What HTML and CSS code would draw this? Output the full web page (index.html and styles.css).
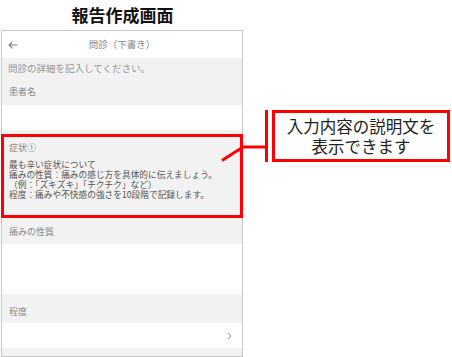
FILE: index.html
```html
<!DOCTYPE html>
<html lang="ja">
<head>
<meta charset="utf-8">
<title>報告作成画面</title>
<link rel="stylesheet" href="styles.css">
</head>
<body>
<div class="page">
  <div class="left">
    <h1 class="title">報告作成画面</h1>
    <div class="phone">
      <div class="header">
        <svg class="back" width="10" height="8" viewBox="0 0 10 8"><path d="M9.5 4H1M4.5 0.6L1 4l3.5 3.4" fill="none" stroke="#7a7a7a" stroke-width="1.1"/></svg>
        <span>問診（下書き）</span>
      </div>
      <p class="intro">問診の詳細を記入してください。</p>
      <div class="label label-first">患者名</div>
      <div class="field field-short"></div>
      <div class="section">
        <div class="section-title">症状①</div>
        <div class="desc">
          <div>最も辛い症状について</div>
          <div>痛みの性質：痛みの感じ方を具体的に伝えましょう。</div>
          <div>（例：「ズキズキ」「チクチク」など）</div>
          <div>程度：痛みや不快感の強さを10段階で記録します。</div>
        </div>
      </div>
      <div class="label label-pain">痛みの性質</div>
      <div class="field field-tall"></div>
      <div class="label label-degree">程度</div>
      <div class="field field-row">
        <svg class="chev" width="5" height="8" viewBox="0 0 5 8"><path d="M0.8 0.8L4 4 0.8 7.2" fill="none" stroke="#9a9a9a" stroke-width="1"/></svg>
      </div>
    </div>
  </div>
  <div class="highlight"></div>
  <svg class="connector" width="452" height="357" viewBox="0 0 452 357"><path d="M222 160.5L243 147H266" fill="none" stroke="#ff0000" stroke-width="3"/></svg>
  <div class="bar"></div>
  <div class="callout">入力内容の説明文を<br>表示できます</div>
</div>
</body>
</html>
```

FILE: styles.css
```css
html, body {
  margin: 0;
  padding: 0;
  background: #ffffff;
}
.page {
  position: relative;
  width: 452px;
  height: 357px;
  overflow: hidden;
  font-family: "Noto Sans CJK JP", "Noto Sans", sans-serif;
}
.left {
  width: 243px;
  padding-left: 1px;
}
.title {
  margin: 0;
  height: 30px;
  line-height: 30px;
  text-align: center;
  font-size: 17px;
  font-weight: 700;
  color: #111111;
}
.phone {
  box-sizing: border-box;
  width: 242px;
  height: 327px;
  border: 1px solid #c9c9c9;
  background: #f2f2f2;
}
.header {
  position: relative;
  height: 27px;
  line-height: 27px;
  background: #ffffff;
  text-align: center;
  font-size: 9.5px;
  color: #858585;
}
.back {
  position: absolute;
  left: 6px;
  top: 10px;
}
.intro {
  margin: 0;
  height: 20px;
  line-height: 20px;
  padding-left: 6px;
  font-size: 9.5px;
  color: #959595;
}
.label {
  padding-left: 7px;
  font-size: 9px;
  color: #8a8a8a;
}
.label-first {
  height: 27px;
  line-height: 28px;
}
.label-pain {
  height: 24px;
  line-height: 24px;
}
.label-degree {
  height: 29px;
  line-height: 23px;
  padding-top: 6px;
  box-sizing: border-box;
}
.field {
  background: #ffffff;
}
.field-short {
  height: 25px;
}
.field-tall {
  height: 50px;
}
.field-row {
  height: 25px;
  display: flex;
  align-items: center;
  justify-content: flex-end;
  padding-right: 10px;
}
.section {
  box-sizing: border-box;
  height: 90px;
  padding: 12px 0 0 7px;
}
.section-title {
  font-size: 9px;
  line-height: 12px;
  color: #8a8a8a;
}
.desc {
  margin-top: 6px;
  font-size: 8.7px;
  line-height: 10px;
  color: #555555;
  white-space: nowrap;
}
.highlight {
  position: absolute;
  left: 1px;
  top: 134px;
  width: 242px;
  height: 84px;
  box-sizing: border-box;
  border: 3px solid #ff0000;
}
.connector {
  position: absolute;
  left: 0;
  top: 0;
}
.bar {
  position: absolute;
  left: 265px;
  top: 110px;
  width: 3px;
  height: 52px;
  background: #ff0000;
}
.callout {
  position: absolute;
  left: 272px;
  top: 110px;
  width: 178px;
  height: 52px;
  box-sizing: border-box;
  border: 3px solid #ff0000;
  display: flex;
  align-items: center;
  justify-content: center;
  text-align: center;
  font-size: 16.5px;
  line-height: 20px;
  color: #222222;
}
```
